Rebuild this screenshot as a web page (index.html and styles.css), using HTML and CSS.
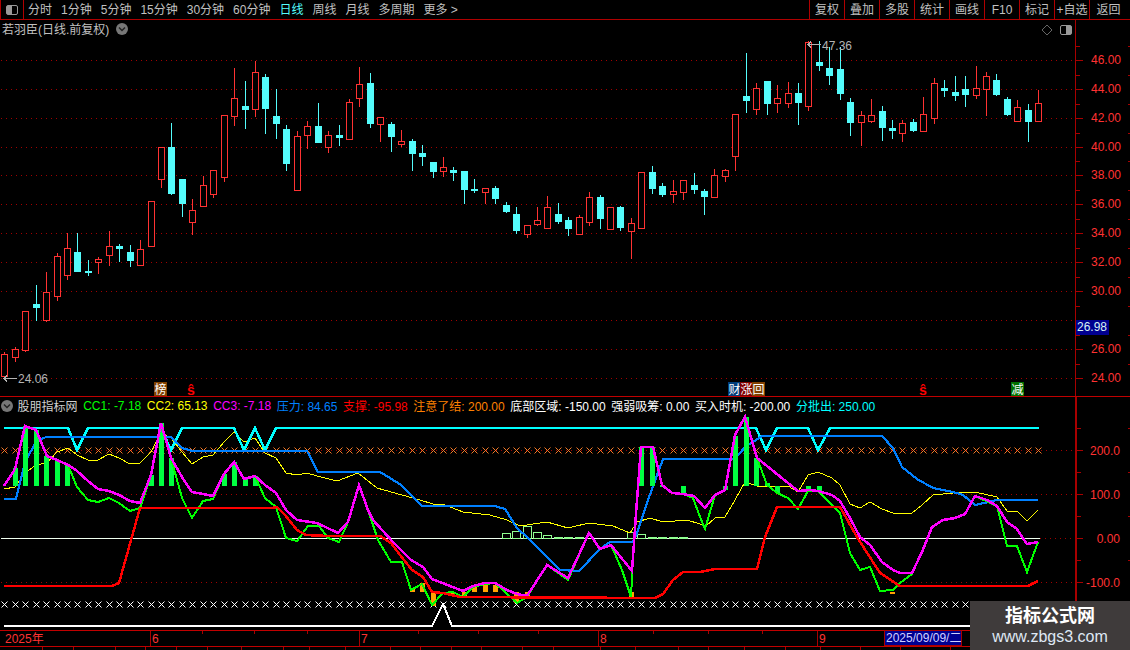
FILE: index.html
```html
<!DOCTYPE html>
<html lang="zh">
<head>
<meta charset="utf-8">
<title>若羽臣 日线</title>
<link rel="stylesheet" href="styles.css">
</head>
<body>
<div class="app">
  <header class="toolbar">
    <div class="side-toggle">
      <svg class="toggle-icon" viewBox="0 0 14 12"><rect class="icon-frame" x="1.500" y="1.500" width="11" height="9" rx="1.500"/><rect class="icon-fill" x="2" y="2" width="5" height="8"/></svg>
    </div>
    <nav class="periods">
      <span>分时</span><span>1分钟</span><span>5分钟</span><span>15分钟</span><span>30分钟</span><span>60分钟</span>
      <span class="active">日线</span><span>周线</span><span>月线</span><span>多周期</span><span>更多 &gt;</span>
    </nav>
    <nav class="actions">
      <span>复权</span><span>叠加</span><span>多股</span><span>统计</span><span>画线</span><span>F10</span><span>标记</span><span>+自选</span><span class="last">返回</span>
    </nav>
  </header>

  <section class="pane pane-price">
    <div class="pane-title">
      <span>若羽臣(日线.前复权)</span>
      <svg class="chev" viewBox="0 0 12 12"><circle class="chev-bg" cx="6" cy="6" r="6"/><path class="chev-mark" d="M3 4.500 6 7.500 9 4.500"/></svg>
    </div>
    <svg id="price" class="chart chart-price" viewBox="0 20 1130 377">
      <g id="price-geo"></g>
      <path class="icon-line" d="M1047 25 1052 30 1047 35 1042 30Z"/>
      <rect class="icon-frame" x="1060.500" y="25.500" width="11" height="9" rx="1.500"/>
      <rect class="icon-fill" x="1066" y="26" width="5" height="8"/>
      <path class="note-arrow" d="M821 44.500H808M811 41.500 808 44.500 811 47.500"/>
      <text class="note" x="822" y="50">47.36</text>
      <path class="note-arrow" d="M17 378.500H4M7 375.500 4 378.500 7 381.500"/>
      <text class="note" x="18" y="383">24.06</text>
      <g class="axis-text">
        <text x="1121" y="64">46.00</text><text x="1121" y="93">44.00</text><text x="1121" y="122">42.00</text>
        <text x="1121" y="151">40.00</text><text x="1121" y="179">38.00</text><text x="1121" y="208">36.00</text>
        <text x="1121" y="237">34.00</text><text x="1121" y="266">32.00</text><text x="1121" y="295">30.00</text>
        <text x="1121" y="353">26.00</text><text x="1121" y="382">24.00</text>
      </g>
      <rect class="now-box" x="1076" y="320" width="33" height="15"/>
      <text class="now-text" x="1077" y="331">26.98</text>
      <rect class="b-brown" x="154" y="382" width="13" height="14"/><text class="b-text" x="154.500" y="394">榜</text>
      <text class="b-dollar" x="187" y="395">ŝ</text>
      <rect class="b-blue" x="728" y="382" width="13" height="14"/><text class="b-text" x="728.500" y="394">财</text>
      <rect class="b-red" x="740" y="382" width="13" height="14"/><text class="b-text" x="740.500" y="394">涨</text>
      <rect class="b-brown" x="752" y="382" width="13" height="14"/><text class="b-text" x="752.500" y="394">回</text>
      <text class="b-dollar" x="919" y="395">ŝ</text>
      <rect class="b-green" x="1011" y="382" width="13" height="14"/><text class="b-text" x="1011.500" y="394">减</text>
    </svg>
  </section>

  <section class="pane pane-ind">
    <div class="legend">
      <svg class="chev" viewBox="0 0 12 12"><circle class="chev-bg" cx="6" cy="6" r="6"/><path class="chev-mark" d="M3 4.500 6 7.500 9 4.500"/></svg>
      <span class="c-name">股朋指标网</span>
      <span class="c-green">CC1: -7.18</span>
      <span class="c-yellow">CC2: 65.13</span>
      <span class="c-magenta">CC3: -7.18</span>
      <span class="c-blue">压力: 84.65</span>
      <span class="c-red">支撑: -95.98</span>
      <span class="c-orange">注意了结: 200.00</span>
      <span class="c-white">底部区域: -150.00</span>
      <span class="c-white">强弱吸筹: 0.00</span>
      <span class="c-white">买入时机: -200.00</span>
      <span class="c-cyan">分批出: 250.00</span>
    </div>
    <svg id="ind" class="chart chart-ind" viewBox="0 397 1130 233">
      <g id="ind-geo"></g>
      <g class="axis-text">
        <text x="1120" y="455">200.0</text><text x="1120" y="499">100.0</text>
        <text x="1120" y="543">0.00</text><text x="1120" y="587">-100.0</text>
      </g>
    </svg>
  </section>

  <footer class="timeline">
    <svg id="time" class="chart chart-time" viewBox="0 630 1130 20">
      <g id="time-geo"></g>
      <g class="time-text">
        <text x="5" y="643">2025年</text><text x="152" y="643">6</text><text x="361" y="643">7</text>
        <text x="600" y="643">8</text><text x="819" y="643">9</text>
      </g>
      <rect class="date-box" x="884.500" y="630.500" width="77" height="15"/>
      <text class="date-text" x="886" y="642">2025/09/09/二</text>
    </svg>
    <div class="watermark">
      <strong>指标公式网</strong>
      <span>www.zbgs3.com</span>
    </div>
  </footer>
</div>
<script src="chart.js"></script>
</body>
</html>
```
FILE: styles.css
```css
* { box-sizing: border-box; }
html, body { margin: 0; padding: 0; background: #000; }
body {
  width: 1130px;
  height: 650px;
  overflow: hidden;
  font-family: "Liberation Sans", "Noto Sans CJK SC", sans-serif;
  font-size: 12px;
  color: #c0c0c0;
}
.app { display: flex; flex-direction: column; width: 1130px; height: 650px; }

.toolbar {
  display: flex;
  align-items: stretch;
  height: 20px;
  border-bottom: 1px solid #b00000;
  flex: none;
}
.side-toggle {
  width: 24px;
  display: flex;
  align-items: center;
  justify-content: center;
  border-left: 1px solid #b00000;
  border-right: 1px solid #b00000;
}
.toggle-icon { width: 14px; height: 12px; }
.periods {
  display: flex;
  gap: 9px;
  align-items: center;
  padding: 1px 0 0 4px;
  line-height: 18px;
}
.periods span { white-space: nowrap; }
.periods .active { color: #54fcfc; }
.actions { display: flex; margin-left: auto; line-height: 20px; }
.actions span {
  width: 35px;
  text-align: center;
  border-left: 1px solid #b00000;
  white-space: nowrap;
}
.actions .last { width: 41px; padding-right: 3px; }

.pane { position: relative; flex: none; }
.pane-price { height: 377px; }
.pane-ind { height: 233px; }
.chart { display: block; width: 1130px; }
.chart-price { height: 377px; }
.chart-ind { height: 233px; }
.chart-time { height: 20px; }

.pane-title {
  position: absolute;
  left: 2px;
  top: 0;
  display: flex;
  align-items: center;
  gap: 7px;
  height: 17px;
}
.chev { width: 12px; height: 12px; flex: none; }
.chev-bg { fill: #777; }
.chev-mark { fill: none; stroke: #222; stroke-width: 1.5; }

.legend {
  position: absolute;
  left: 1px;
  top: 0;
  display: flex;
  align-items: center;
  gap: 5.6px;
  height: 17px;
  white-space: nowrap;
}
.legend .c-name { margin-left: -1px; color: #d0d0d0; }
.c-green { color: #00ff00; }
.c-yellow { color: #ffff00; }
.c-magenta { color: #ff00ff; }
.c-blue { color: #0080ff; }
.c-red { color: #ff0000; }
.c-orange { color: #ff8000; }
.c-white { color: #ffffff; }
.c-cyan { color: #00ffff; }

.timeline { position: relative; height: 20px; flex: none; }
.watermark {
  position: absolute;
  right: 0;
  bottom: 0;
  width: 160px;
  height: 49px;
  background: #3f3b3b;
  display: flex;
  flex-direction: column;
  align-items: center;
  justify-content: center;
  color: #fff;
}
.watermark strong { font-size: 18px; line-height: 23px; font-weight: 700; }
.watermark span { font-size: 16px; line-height: 18px; color: #dfe8f4; font-family: "Liberation Sans", sans-serif; }

/* chart geometry */
.icon-frame { fill: none; stroke: #999; stroke-width: 1; }
.icon-fill { fill: #999; }
.icon-line { fill: none; stroke: #666; stroke-width: 1; }
.note { fill: #b4b4b4; font-size: 12px; }
.note-arrow { fill: none; stroke: #b4b4b4; stroke-width: 1; shape-rendering: crispEdges; }
.axis-text text { fill: #ff3232; font-size: 12px; text-anchor: end; }
.now-box { fill: #000090; }
.now-text { fill: #d8f4f4; font-size: 12px; }
.b-brown { fill: #804000; }
.b-blue { fill: #003c78; }
.b-red { fill: #800000; }
.b-green { fill: #007000; }
.b-text { fill: #fff; font-size: 12px; }
.b-dollar { fill: #ff0000; font-size: 14px; font-weight: 700; }

.grid-dot { stroke: #a00000; stroke-width: 1; stroke-dasharray: 1 4; fill: none; shape-rendering: crispEdges; }
.axis-line { fill: #a80000; }
.axis-tick { stroke: #a80000; stroke-width: 1; fill: none; shape-rendering: crispEdges; }
.pane-rule { fill: #c00000; }

.wick-red { stroke: #ff3232; stroke-width: 1; fill: none; shape-rendering: crispEdges; }
.wick-cyan { stroke: #54fcfc; stroke-width: 1; fill: none; shape-rendering: crispEdges; }
.body-red { stroke: #ff3232; stroke-width: 1; fill: #000; shape-rendering: crispEdges; }
.body-cyan { fill: #54fcfc; stroke: none; shape-rendering: crispEdges; }

.ln { fill: none; stroke-linejoin: miter; shape-rendering: crispEdges; }
.ln-white { stroke: #f0fff0; stroke-width: 1; }
.ln-base { stroke: #ffffff; stroke-width: 2; }
.ln-yellow { stroke: #ffff00; stroke-width: 1; }
.ln-cyan { stroke: #00ffff; stroke-width: 2.5; }
.ln-blue { stroke: #0080ff; stroke-width: 2.2; }
.ln-green { stroke: #00ff00; stroke-width: 2; }
.ln-magenta { stroke: #ff00ff; stroke-width: 2.5; }
.ln-red { stroke: #ff0000; stroke-width: 2.5; }
.x-orange { stroke: #f07828; stroke-width: 1; fill: none; }
.x-white { stroke: #ffffff; stroke-width: 1; fill: none; }
.bar-green { fill: #00ff40; }
.bar-orange { fill: #ffa000; }
.bar-hollow { fill: none; stroke: #90ff90; stroke-width: 1; shape-rendering: crispEdges; }

.time-text text { fill: #ff3232; font-size: 12px; }
.date-box { fill: #000090; stroke: #a80000; stroke-width: 1; }
.date-text { fill: #d0d0ff; font-size: 12px; }
```
FILE: chart.js
```js
(function () {
var NS = "http://www.w3.org/2000/svg";
function el(parent, tag, cls, attrs) {
  var n = document.createElementNS(NS, tag);
  if (cls) n.setAttribute("class", cls);
  for (var k in attrs) n.setAttribute(k, attrs[k]);
  parent.appendChild(n);
  return n;
}
function cx(i) { return Math.round(4.3 + 10.444 * i); }
function path(parent, cls, d) { el(parent, "path", cls, { d: d }); }
function poly(parent, cls, pts) {
  var s = [];
  for (var i = 0; i < pts.length; i += 2) s.push(pts[i] + "," + pts[i + 1]);
  el(parent, "polyline", "ln " + cls, { points: s.join(" ") });
}

/* ---------- candles: colour, body top, body bottom, high, low ---------- */
var C = [
"r",354,376,352,376, "r",349,357,347,362, "r",311,350,311,352, "c",304,307,285,321, "r",292,320,272,322,
"r",256,296,253,301, "r",248,275,233,280, "c",252,271,233,272, "c",271,272,260,276, "r",259,262,257,274,
"r",246,255,231,266, "c",246,248,244,262, "c",252,260,245,267, "r",249,265,240,265, "r",201,246,201,246,
"r",147,179,147,188, "c",147,193,123,195, "c",179,203,179,217, "r",210,222,199,235, "r",185,206,176,206,
"r",170,194,170,198, "r",115,177,115,182, "r",98,116,68,126, "c",106,109,81,129, "r",72,109,61,117,
"c",77,108,74,134, "c",116,123,89,139, "c",129,163,125,171, "r",136,190,131,190, "r",126,135,121,149,
"c",126,142,103,143, "r",135,147,131,153, "c",135,137,125,146, "r",102,139,99,140, "r",84,98,67,107,
"c",83,123,73,128, "r",117,124,117,142, "c",124,136,122,152, "r",141,144,130,147, "c",141,153,139,171,
"c",153,156,145,166, "c",162,171,162,178, "r",167,171,157,177, "c",170,172,167,181, "c",171,189,171,204,
"c",189,190,179,193, "r",188,192,188,204, "c",188,198,186,204, "c",205,211,202,213, "c",214,230,207,234,
"r",225,234,225,238, "r",220,224,207,226, "r",207,228,196,228, "c",214,221,203,224, "c",220,228,217,236,
"r",217,234,215,234, "r",197,222,192,226, "c",197,218,195,229, "r",207,229,207,229, "c",207,227,206,231,
"r",223,231,218,259, "r",172,228,172,228, "c",172,188,166,194, "c",186,194,183,197, "r",191,194,180,203,
"r",180,192,180,200, "c",185,189,173,194, "c",191,196,189,215, "r",175,197,169,197, "r",170,176,169,182,
"r",114,156,114,171, "c",96,100,53,113, "r",88,109,83,115, "c",81,103,81,115, "r",98,103,85,113,
"r",93,103,82,108, "c",93,102,83,125, "r",42,106,41,111, "c",62,65,41,71, "c",68,75,47,85,
"c",69,93,47,100, "c",102,122,98,136, "r",115,122,111,146, "r",115,121,99,123, "c",111,127,106,141,
"c",128,130,120,139, "r",123,133,120,142, "c",122,130,119,132, "r",114,131,97,131, "r",83,118,78,124,
"c",88,90,80,97, "c",92,95,76,101, "c",89,94,76,107, "r",88,95,66,99, "r",76,89,72,116,
"c",80,94,74,96, "c",99,114,97,116, "r",107,121,100,121, "c",110,121,104,142, "r",103,121,90,121
];

/* ---------- price pane ---------- */
var pg = document.getElementById("price-geo");
var GRID = [60, 89, 118, 147, 175, 204, 233, 262, 291, 320, 349, 378];
GRID.forEach(function (y) {
  path(pg, "grid-dot", "M1 " + (y + 0.5) + "H1075");
});
el(pg, "rect", "axis-line", { x: 1075, y: 20, width: 1, height: 377 });
el(pg, "rect", "pane-rule", { x: 0, y: 396, width: 1130, height: 1 });
var ticks = "";
GRID.forEach(function (y) {
  ticks += "M1076 " + (y + 0.5) + "H1083";
  var m = Math.round(y - 14.5) + 0.5;
  ticks += "M1076 " + m + "H1080M1128 " + m + "H1130";
});
path(pg, "axis-tick", ticks);

var wr = "", wc = "", bc = "", i, o, x;
for (i = 0; i * 5 < C.length; i++) {
  o = i * 5; x = cx(i);
  var seg = "M" + (x + 0.5) + " " + C[o + 3] + "V" + C[o + 4];
  if (C[o] === "r") wr += seg; else wc += seg;
}
path(pg, "wick-red", wr);
path(pg, "wick-cyan", wc);
for (i = 0; i * 5 < C.length; i++) {
  o = i * 5; x = cx(i);
  var bt = C[o + 1], bb = C[o + 2];
  if (C[o] === "r") {
    el(pg, "rect", "body-red", { x: x - 2.5, y: bt + 0.5, width: 6, height: bb - bt });
  } else {
    bc += "M" + (x - 3) + " " + bt + "h7V" + (bb + 1) + "h-7Z";
  }
}
path(pg, "body-cyan", bc);

/* ---------- indicator pane ---------- */
var ig = document.getElementById("ind-geo");
[450, 494, 582].forEach(function (y) { path(ig, "grid-dot", "M1 " + (y + 0.5) + "H1075"); });
path(ig, "grid-dot", "M1040 538.5H1075");

function xmark(px, y) {
  return "M" + (px - 2.5) + " " + (y - 2.5) + "l6 6M" + (px + 3.5) + " " + (y - 2.5) + "l-6 6";
}
var xo = "", xw = "";
for (i = 0; i < 100; i++) {
  xo += xmark(cx(i), 450);
  if (i < 93) xw += xmark(cx(i), 604);
}
path(ig, "x-orange", xo);
path(ig, "x-white", xw);

poly(ig, "ln-white", [1, 538.5, 1040, 538.5]);
poly(ig, "ln-base", [4, 626, 432, 626, 443, 604, 452, 626, 1130, 626]);

[[48, 533], [49, 531], [50, 526], [51, 532], [52, 535], [53, 537], [54, 537], [55, 537],
 [60, 532], [61, 534], [62, 537], [63, 537], [64, 537], [65, 537]].forEach(function (b) {
  el(ig, "rect", "bar-hollow", { x: cx(b[0]) - 3.5, y: b[1] + 0.5, width: 8, height: 538 - b[1] });
});

poly(ig, "ln-yellow", [4,489,15,487,25,473,36,465,47,463,57,452,68,448,77,455,88,460,98,460,109,454,119,458,130,464,140,463,151,452,161,433,171,438,182,452,192,464,203,457,213,455,224,442,234,432,244,442,255,438,265,453,276,458,286,473,297,475,307,473,317,476,337,481,358,473,377,488,402,495,420,500,433,504,445,505,463,512,490,515,507,520,520,526,547,522,568,528,589,523,613,526,630,533,637,522,650,518,663,522,687,520,700,524,705,527,715,518,725,517,735,500,745,482,757,486,777,487,788,486,798,492,808,475,818,472,832,478,840,485,850,504,860,508,870,502,882,509,893,513,912,513,922,505,933,495,953,493,975,492,997,497,1007,511,1017,511,1027,521,1038,510]);
poly(ig, "ln-cyan", [4,428,68,428,77,450,88,428,161,428,171,450,182,428,234,428,244,450,255,428,265,450,276,428,756,428,766,450,777,428,808,428,818,450,830,428,1039,428]);
poly(ig, "ln-blue", [4,499,16,499,25,462,36,442,46,437,171,437,182,448,192,451,307,451,318,472,380,472,390,478,401,485,422,506,495,506,505,509,517,528,528,538,560,570,579,571,600,549,610,542,633,542,637,533,648,500,663,459,735,459,745,447,762,436,882,436,893,448,902,467,917,479,933,488,953,492,963,495,975,505,997,500,1038,500]);

[[1,468],[2,426],[3,430],[4,456],[5,460],[6,465],[14,475],[15,423],[16,458],[21,474],[22,462],[23,479],[24,476],
 [61,447],[62,447],[63,485],[65,493],[69,490],[70,436],[71,417],[72,458],[73,483],[74,493],[77,491],[78,491]].forEach(function (b) {
  var t = Math.min(b[1], 486), h = Math.abs(b[1] - 486);
  el(ig, "rect", "bar-green", { x: cx(b[0]) - 2, y: t, width: 5, height: Math.max(h, 2) });
});
[[39,588],[40,583],[41,606],[42,593],[43,593],[44,598],[45,587],[46,585],[47,585],[49,603],[50,597],[60,597],[85,592]].forEach(function (b) {
  var t = Math.min(b[1], 592), h = Math.max(Math.abs(b[1] - 592), 2);
  el(ig, "rect", "bar-orange", { x: cx(b[0]) - 2, y: t, width: 5, height: h });
});

poly(ig, "ln-green", [4,486,15,469,25,426,36,430,47,456,57,460,68,465,77,487,88,500,98,502,109,498,119,503,130,511,140,508,151,475,161,423,171,458,182,498,192,518,203,501,213,499,224,474,234,462,244,479,255,476,265,498,276,507,286,538,297,541,308,526,319,526,328,538,339,542,348,522,359,485,368,510,378,540,391,562,402,562,411,590,422,584,432,605,443,593,453,592,463,597,473,587,485,584,495,583,517,603,527,597,547,565,568,580,589,533,600,549,611,545,622,570,631,597,633,557,641,447,653,447,662,485,672,493,683,494,693,498,700,517,705,529,715,495,725,490,735,435,745,417,757,458,767,485,777,493,788,498,798,509,808,491,818,491,832,505,840,513,850,553,860,570,870,567,880,591,893,590,900,583,912,574,922,552,932,527,943,520,955,518,965,514,975,496,997,506,1007,546,1017,546,1027,572,1038,542]);
poly(ig, "ln-magenta", [4,486,15,469,25,426,36,430,47,456,57,460,68,465,77,471,88,481,98,489,109,491,119,495,130,501,140,503,151,475,161,423,171,458,182,477,192,492,203,494,213,496,224,474,234,462,244,479,255,476,265,485,276,493,286,510,297,520,317,523,338,533,348,522,359,485,368,510,373,520,393,542,411,560,423,567,432,579,463,591,473,586,485,583,495,583,507,590,517,594,527,596,547,565,568,578,589,533,600,549,611,545,632,571,637,500,641,447,653,447,662,485,672,493,683,494,694,496,705,508,715,495,725,490,735,435,745,417,757,458,798,491,810,490,818,491,832,495,840,501,850,518,860,537,870,545,882,562,893,570,900,573,912,573,922,552,932,527,943,520,955,518,965,514,975,496,987,500,997,506,1007,522,1017,529,1027,544,1038,542]);
poly(ig, "ln-red", [4,586,112,586,119,583,140,508,272,508,277,507,285,515,297,530,306,535,328,536,380,536,391,543,400,555,412,570,423,577,432,592,443,593,460,597,655,598,663,594,673,580,683,572,700,572,715,569,757,569,765,537,777,507,840,507,857,537,880,573,900,586,1028,586,1038,581]);

el(ig, "rect", "axis-line", { x: 1075, y: 397, width: 2, height: 233 });
var t2 = "";
[450, 494, 538, 582].forEach(function (y) {
  t2 += "M1077 " + (y + 0.5) + "H1083";
  t2 += "M1077 " + (y - 21.5) + "H1081M1128 " + (y - 21.5) + "H1130";
});
t2 += "M1077 604.5H1081M1128 604.5H1130";
path(ig, "axis-tick", t2);

/* ---------- time axis ---------- */
var tg = document.getElementById("time-geo");
el(tg, "rect", "pane-rule", { x: 0, y: 630, width: 1130, height: 1 });
el(tg, "rect", "pane-rule", { x: 0, y: 646, width: 1130, height: 1 });
var t3 = "";
[150, 359, 598, 817].forEach(function (px) { t3 += "M" + (px + 0.5) + " 631V646"; });
[202, 254, 307, 418, 478, 538, 653, 708, 762].forEach(function (px) { t3 += "M" + (px + 0.5) + " 631V634"; });
[42, 73, 115, 145, 176, 207, 241, 283, 309, 345, 390, 420, 451, 481, 522, 553, 600, 635, 678, 708, 744, 785, 820, 860, 900, 950].forEach(function (px) {
  t3 += "M" + (px + 0.5) + " 647V650";
});
path(tg, "axis-tick", t3);
})();
```
